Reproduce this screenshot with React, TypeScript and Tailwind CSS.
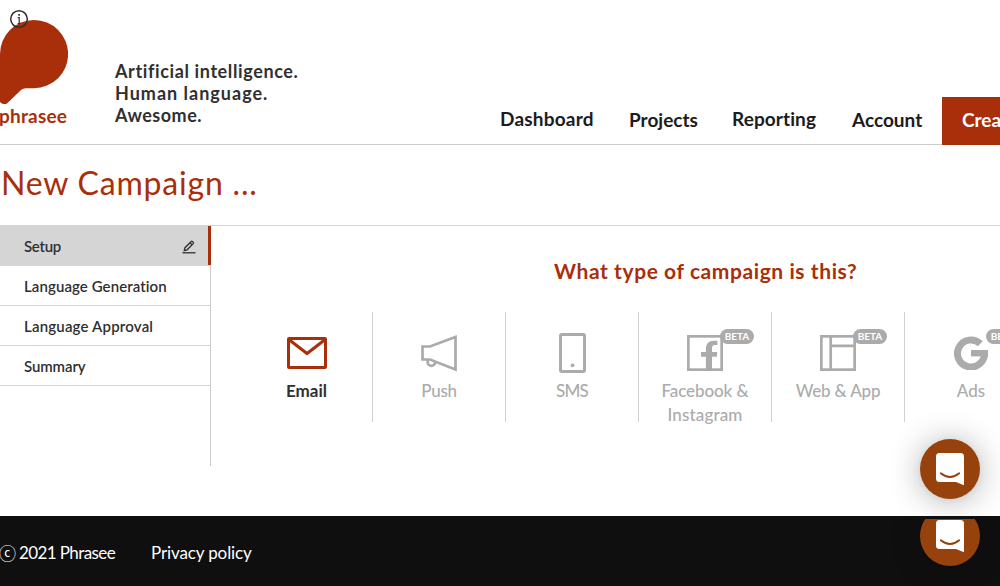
import React from "react";
import type { ReactNode } from "react";

function Logo() {
  return (
    <div className="w-[68px] shrink-0 pt-5">
      <svg width="68" height="84" viewBox="0 0 68 84" fill="#a92f0a" className="block">
        <path d="M34 0a34 34 0 0 1 0 68.200H27c-4 0-5 .8-7.500 3.200L8 82.500C5.500 85 3.500 85 0 82V34A34 34 0 0 1 34 0Z" />
      </svg>
      <div className="-ml-px text-[19px]/[24px] font-bold tracking-[0.2px] text-[#a92f0a]">phrasee</div>
    </div>
  );
}

function InfoIcon() {
  return (
    <svg width="20" height="20" viewBox="0 0 20 20" className="absolute left-[9px] top-[9px]" fill="none" stroke="#303030">
      <circle cx="10" cy="10" r="8.300" strokeWidth="1.500" />
      <path d="M10.100 5v1.700" strokeWidth="1.700" />
      <path d="M8.700 8.600h1.500v6M8.700 14.500h3" strokeWidth="1.200" />
    </svg>
  );
}

function EmailIcon() {
  return (
    <svg width="40" height="32" viewBox="0 0 40 32" fill="none" stroke="#a92f0a" strokeWidth="3" className="ml-px">
      <rect x="1.500" y="1.500" width="37" height="29" rx=".5" />
      <path d="M2.500 3 20 16.500 37.500 3" />
    </svg>
  );
}

function PushIcon() {
  return (
    <svg width="36" height="37" viewBox="0 0 36 37" fill="none" stroke="#ababab" strokeWidth="2.700">
      <path d="M1.500 11.500H9L34.500 2V34.500L9 24.500H1.500Z" />
      <path d="M6.700 25v2.200a3.700 3.700 0 0 0 7.400 0" />
    </svg>
  );
}

function SmsIcon() {
  return (
    <svg width="27" height="40" viewBox="0 0 27 40" fill="none" stroke="#ababab" strokeWidth="3">
      <rect x="1.500" y="1.500" width="24" height="37" rx="1.500" />
      <circle cx="13.500" cy="32.300" r="1.900" fill="#ababab" stroke="none" />
    </svg>
  );
}

function FacebookIcon() {
  return (
    <svg width="36" height="36" viewBox="0 0 36 36" fill="none" stroke="#ababab" strokeWidth="2.700">
      <rect x="1.350" y="1.350" width="33.300" height="33.300" />
      <path
        d="M18.900 35V21.700H14V17h4.900v-3c0-5.500 3-8.300 8-8.300h3.400V10h-2.500c-2 0-2.800 1-2.800 3v4h5.300l-.5 4.700H25V35Z"
        fill="#ababab"
        stroke="none"
      />
    </svg>
  );
}

function WebIcon() {
  return (
    <svg width="36" height="36" viewBox="0 0 36 36" fill="none" stroke="#ababab" strokeWidth="2.700">
      <rect x="1.350" y="1.350" width="33.300" height="33.300" />
      <path d="M10.700 1v34M10.700 10.800H35" />
    </svg>
  );
}

function AdsIcon() {
  return (
    <svg width="34" height="34" viewBox="0 0 34 34" fill="none" stroke="#ababab" strokeWidth="7" className="mr-px">
      <path d="M26.300 7.700A13.500 13.500 0 1 0 30.500 17" />
      <path d="M17 17.200h17" strokeWidth="6.400" />
    </svg>
  );
}

function PencilIcon() {
  return (
    <svg width="14" height="14" viewBox="0 0 14 14" fill="none" stroke="#303030" strokeWidth="1.300">
      <path d="M2.300 10.500 3 7.700 9.200 1.500q.6-.5 1.200 0l.9.900q.5.600 0 1.200L5.100 9.800ZM8 2.800l2.100 2.100" />
      <path d="M.5 12.800h13" strokeWidth="1.300" />
    </svg>
  );
}

function NavItem({ className, children }: { className: string; children: ReactNode }) {
  return <a className={`whitespace-nowrap text-[19px]/[24px] font-bold text-[#1c1c1c] ${className}`}>{children}</a>;
}

function Step({ label, className = "" }: { label: string; className?: string }) {
  return (
    <div className="h-10 border-b border-[#d5d5d5] pl-6 text-[15px]/[41px] font-semibold text-[#303030]">
      <span className={className}>{label}</span>
    </div>
  );
}

interface TypeProps {
  icon: ReactNode;
  label: ReactNode;
  active?: boolean;
  beta?: boolean;
}

function CampaignType({ icon, label, active, beta }: TypeProps) {
  return (
    <div className="relative h-[110px] w-[133px] shrink-0 border-r border-[#d0d0d0]">
      <div className="flex h-[66px] items-center justify-center pt-4">{icon}</div>
      <div className={`pt-px text-center text-[17px]/[24px] ${active ? "pl-px font-bold text-[#303030]" : "font-medium text-[#ababab]"}`}>
        {label}
      </div>
      {beta && (
        <span className="absolute left-[81px] top-[17px] h-[15px] w-[34px] rounded-full bg-[#ababab] text-center text-[10px]/[15px] font-bold text-white">
          BETA
        </span>
      )}
    </div>
  );
}

function ChatIcon() {
  return (
    <svg width="28" height="33" viewBox="0 0 28 33" className="absolute left-4 top-[14px]">
      <path d="M3.500 0h21A3.500 3.500 0 0 1 28 3.500V32.200L20 29H3.500A3.500 3.500 0 0 1 0 25.500V3.500A3.500 3.500 0 0 1 3.500 0Z" fill="#fff" />
      <path d="M4.800 20.300q9.200 7.300 18.400 0" fill="none" stroke="#97420c" strokeWidth="1.900" strokeLinecap="round" />
    </svg>
  );
}

export default function App() {
  return (
    <div className="relative h-[586px] w-[1000px] overflow-hidden bg-white font-['Lato',sans-serif]">
      <header className="flex h-[145px] border-b border-[#cbcbcb]">
        <Logo />
        <div className="ml-[47px] w-[386px] shrink-0 pt-[60px] text-[18px]/[22px] font-bold text-[#303030]">
          <p className="tracking-[0.62px]">Artificial intelligence.</p>
          <p className="tracking-[1px]">Human language.</p>
          <p className="tracking-[0.5px]">Awesome.</p>
        </div>
        <nav className="flex shrink-0 items-start">
          <NavItem className="-ml-px w-[129px] pt-[107px] tracking-[0.2px]">Dashboard</NavItem>
          <NavItem className="w-[103px] pt-[108px]">Projects</NavItem>
          <NavItem className="w-[120px] pt-[107px] tracking-[0.1px]">Reporting</NavItem>
          <NavItem className="w-[90px] pt-[108px]">Account</NavItem>
          <a className="mt-[97px] h-12 w-[130px] bg-[#a92f0a] pl-5 text-[19px]/[45px] font-bold text-white">Create</a>
        </nav>
      </header>
      <InfoIcon />

      <h1 className="h-20 pl-px pt-[18px] text-[32px]/[40px] tracking-[0.8px] text-[#a92f0a]">New Campaign ...</h1>

      <main className="flex h-[291px] border-t border-[#d5d5d5]">
        <aside className="h-60 w-[211px] shrink-0 border-r border-[#cbcbcb]">
          <div className="flex h-10 w-[211px] items-start justify-between bg-[#d5d5d5] pl-6 text-[15px]/[41px] font-semibold text-[#303030]">
            <span className="tracking-[-0.3px]">Setup</span>
            <div className="flex h-[39px] items-center border-r-[3px] border-[#a92f0a] pr-3 pt-[3px]">
              <PencilIcon />
            </div>
          </div>
          <Step label="Language Generation" className="tracking-[0.08px]" />
          <Step label="Language Approval" className="tracking-[0.18px]" />
          <Step label="Summary" className="tracking-[-0.1px]" />
        </aside>
        <section className="min-w-0 flex-1 overflow-hidden">
          <h2 className="pl-[343px] pt-[31px] text-[21px]/[28px] font-bold tracking-[0.58px] whitespace-nowrap text-[#a92f0a]">
            What type of campaign is this?
          </h2>
          <div className="mt-[27px] flex pl-[29px]">
            <CampaignType active icon={<EmailIcon />} label="Email" />
            <CampaignType icon={<PushIcon />} label={<span className="tracking-[-0.3px]">Push</span>} />
            <CampaignType icon={<SmsIcon />} label={<span className="tracking-[-0.7px]">SMS</span>} />
            <CampaignType
              beta
              icon={<FacebookIcon />}
              label={
                <>
                  <span className="tracking-[-0.1px]">Facebook &amp;</span>
                  <br />
                  <span className="tracking-[0.15px]">Instagram</span>
                </>
              }
            />
            <CampaignType beta icon={<WebIcon />} label={<span className="tracking-[-0.15px]">Web &amp; App</span>} />
            <CampaignType beta icon={<AdsIcon />} label="Ads" />
          </div>
        </section>
      </main>

      <footer className="relative flex h-[70px] items-start bg-[#0f0f0f] pt-[25px] text-[17px]/[24px] text-white">
        <span className="-ml-px w-[20px] font-['Noto_Sans_CJK_JP',sans-serif] text-[17px]/[24px]">ⓒ</span>
        <span className="w-[132px] tracking-[-0.6px]">2021 Phrasee</span>
        <a className="tracking-[-0.12px]">Privacy policy</a>
        <div className="absolute left-[880px] top-[3px] h-[67px] w-[120px] overflow-hidden">
          <div className="absolute -top-[13px] left-10 size-[60px] rounded-full bg-[#97420c] shadow-[0_2px_32px_rgba(0,0,0,0.2)]">
            <ChatIcon />
          </div>
        </div>
      </footer>

      <div className="absolute left-[860px] top-[379px] h-[137px] w-[140px] overflow-hidden">
        <div className="absolute left-[60px] top-[60px] size-[60px] rounded-full bg-[#97420c] shadow-[0_1px_6px_rgba(0,0,0,0.06),0_2px_32px_rgba(0,0,0,0.3)]">
          <ChatIcon />
        </div>
      </div>
    </div>
  );
}
